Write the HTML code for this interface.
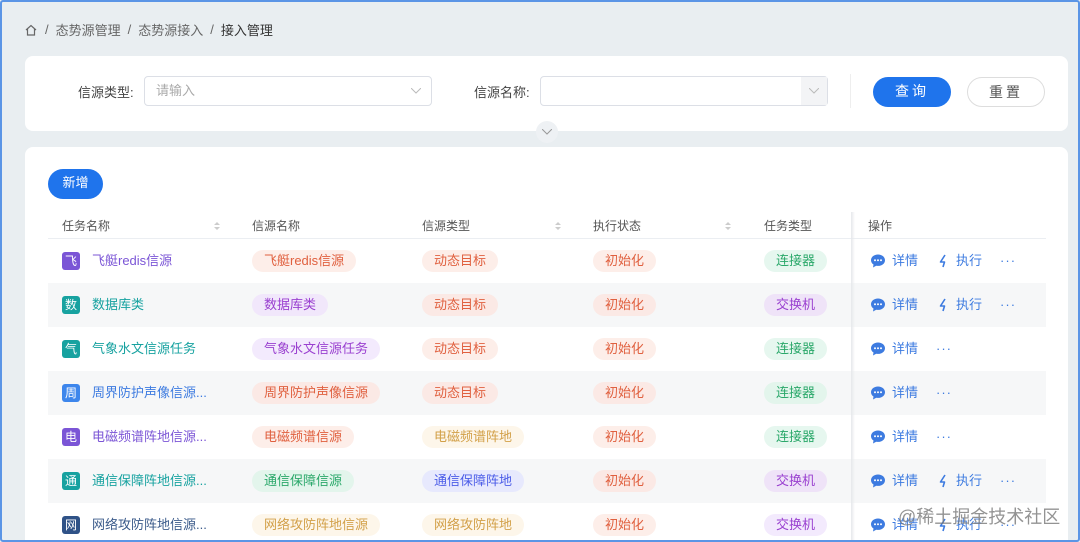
<!DOCTYPE html>
<html><head><meta charset="utf-8"><style>
*{box-sizing:border-box;margin:0;padding:0}
html{width:1080px;height:542px;overflow:hidden}
body{width:1080px;height:542px;overflow:hidden;background:#e9eef1;font-family:"Liberation Sans","Noto Sans CJK SC",sans-serif;position:relative;font-size:13px;color:#333}
.frame{position:absolute;left:0;top:0;width:1080px;height:542px;border:2px solid #5b95e6;border-radius:3px;pointer-events:none;z-index:9}
.bc{position:absolute;left:24px;top:20px;font-size:13px;color:#666;display:flex;align-items:center;gap:7px}
.bc b{font-weight:normal;color:#333}
.card{position:absolute;left:25px;right:12px;background:#fff;border-radius:8px}
.lbl{position:absolute;font-size:13px;color:#444}
.inp{position:absolute;height:30px;border:1px solid #dcdfe6;border-radius:4px;background:#fff;font-size:13px;color:#aaa;padding:6px 11px;line-height:16px}
.btn{position:absolute;height:30px;border-radius:15px;font-size:14px;text-align:center;line-height:28px;letter-spacing:3px}
.tb{position:absolute;left:48px;width:998px;top:212px}
.row{position:absolute;left:0;width:998px;height:44px}
.row.s{background:#f6f7f8}
.c{position:absolute;top:0;height:44px;display:flex;align-items:center;font-size:13px;line-height:18px}
.hd .c{height:27px;color:#555;font-size:12px}
.tag{display:inline-block;height:22px;line-height:22px;padding:0 12px;border-radius:11px;font-size:13px}
.ic{width:18px;height:18px;border-radius:3px;color:#fff;font-size:12px;text-align:center;line-height:18px;margin-right:12px}
.sort{position:absolute;top:9px;width:6px;height:10px}
.op{color:#3d7be0;display:flex;align-items:center;gap:6px}
.dots{color:#3d7be0;letter-spacing:1px}
</style></head><body>
<svg width="0" height="0" style="position:absolute"><defs>
<symbol id="ch" viewBox="0 0 16 16"><path d="M8 1.5C4 1.5 1 4 1 7.2c0 1.8 1 3.3 2.5 4.3L3 14.5l3.2-1.8c.6.1 1.2.2 1.8.2 4 0 7-2.5 7-5.7S12 1.5 8 1.5z" fill="#3d7be0"/><circle cx="5" cy="7.3" r="1" fill="#fff"/><circle cx="8" cy="7.3" r="1" fill="#fff"/><circle cx="11" cy="7.3" r="1" fill="#fff"/></symbol>
<symbol id="bo" viewBox="0 0 12 14"><path d="M7 1L2.5 8H6.5L5 13" fill="none" stroke="#3d7be0" stroke-width="1.6" stroke-linejoin="round"/></symbol>
</defs></svg>
<div class="bc"><svg width="14" height="14" viewBox="0 0 14 14"><path d="M2 7L7 2.5 12 7M3.5 6v6h7V6" fill="none" stroke="#666" stroke-width="1.2"/></svg><span>/</span><span>态势源管理</span><span>/</span><span>态势源接入</span><span>/</span><b>接入管理</b></div>

<div class="card" style="top:56px;height:75px">
<div class="lbl" style="left:53px;top:26px">信源类型:</div>
<div class="inp" style="left:119px;top:20px;width:288px">请输入<svg style="position:absolute;right:10px;top:11px" width="10" height="6"><path d="M0 0L5 5 10 0" fill="none" stroke="#bbb"/></svg></div>
<div class="lbl" style="left:449px;top:26px">信源名称:</div>
<div class="inp" style="left:515px;top:20px;width:288px"><div style="position:absolute;right:0;top:0;width:26px;height:28px;background:#f3f4f6"></div><svg style="position:absolute;right:8px;top:11px" width="10" height="6"><path d="M0 0L5 5 10 0" fill="none" stroke="#bbb"/></svg></div>
<div style="position:absolute;left:825px;top:18px;width:1px;height:34px;background:#eee"></div>
<div class="btn" style="left:848px;top:21px;width:78px;background:#1f74ec;color:#fff">查询</div>
<div class="btn" style="left:942px;top:21px;width:78px;border:1px solid #ddd;color:#555">重置</div>
</div>
<div style="position:absolute;left:536px;top:121px;width:22px;height:22px;border-radius:50%;background:#eef1f4"><svg style="position:absolute;left:6px;top:8px" width="10" height="6"><path d="M0 0L5 5 10 0" fill="none" stroke="#999"/></svg></div>

<div class="card" style="top:147px;height:420px">
<div class="btn" style="left:23px;top:22px;width:55px;background:#1f74ec;color:#fff;font-size:13px;letter-spacing:0">新增</div>
</div>

<div class="tb">
<div class="row hd" style="height:27px;border-bottom:1px solid #ebeef2">
<div class="c" style="left:14px">任务名称</div><svg class="sort" style="left:166px"><path d="M0 4L3 1 6 4M0 6L3 9 6 6" fill="#ccc"/></svg>
<div class="c" style="left:204px">信源名称</div>
<div class="c" style="left:374px">信源类型</div><svg class="sort" style="left:507px"><path d="M0 4L3 1 6 4M0 6L3 9 6 6" fill="#ccc"/></svg>
<div class="c" style="left:545px">执行状态</div><svg class="sort" style="left:677px"><path d="M0 4L3 1 6 4M0 6L3 9 6 6" fill="#ccc"/></svg>
<div class="c" style="left:716px">任务类型</div>
<div class="c" style="left:820px">操作</div>
</div>
<div style="position:absolute;left:803px;top:0;width:4px;height:340px;background:linear-gradient(90deg,#e6e8eb,rgba(255,255,255,0));z-index:3"></div>
</div>

<div class="tb" style="top:239px">
<div class="row" style="top:0"><div class="c" style="left:14px;color:#7b55d6"><div class="ic" style="background:#7b55d6">飞</div>飞艇redis信源</div><div class="c" style="left:204px"><span class="tag" style="background:#fdeee9;color:#e0603f">飞艇redis信源</span></div><div class="c" style="left:374px"><span class="tag" style="background:#fdeee9;color:#e0603f">动态目标</span></div><div class="c" style="left:545px"><span class="tag" style="background:#fdeee9;color:#e0603f">初始化</span></div><div class="c" style="left:716px"><span class="tag" style="background:#e6f7ef;color:#2aa86a">连接器</span></div><div class="c op" style="left:822px"><svg width="16" height="16"><use href="#ch"/></svg><span>详情</span><svg width="12" height="14" style="margin-left:14px"><use href="#bo"/></svg><span>执行</span><span class="dots" style="margin-left:12px">···</span></div></div>
<div class="row s" style="top:44px"><div class="c" style="left:14px;color:#17a2a0"><div class="ic" style="background:#17a2a0">数</div>数据库类</div><div class="c" style="left:204px"><span class="tag" style="background:#f1e7fb;color:#9a40d0">数据库类</span></div><div class="c" style="left:374px"><span class="tag" style="background:#fbe9e5;color:#e0603f">动态目标</span></div><div class="c" style="left:545px"><span class="tag" style="background:#fbe9e5;color:#e0603f">初始化</span></div><div class="c" style="left:716px"><span class="tag" style="background:#efe3f8;color:#9a40d0">交换机</span></div><div class="c op" style="left:822px"><svg width="16" height="16"><use href="#ch"/></svg><span>详情</span><svg width="12" height="14" style="margin-left:14px"><use href="#bo"/></svg><span>执行</span><span class="dots" style="margin-left:12px">···</span></div></div>
<div class="row" style="top:88px"><div class="c" style="left:14px;color:#17a2a0"><div class="ic" style="background:#17a2a0">气</div>气象水文信源任务</div><div class="c" style="left:204px"><span class="tag" style="background:#f3eafd;color:#9a40d0">气象水文信源任务</span></div><div class="c" style="left:374px"><span class="tag" style="background:#fdeee9;color:#e0603f">动态目标</span></div><div class="c" style="left:545px"><span class="tag" style="background:#fdeee9;color:#e0603f">初始化</span></div><div class="c" style="left:716px"><span class="tag" style="background:#e6f7ef;color:#2aa86a">连接器</span></div><div class="c op" style="left:822px"><svg width="16" height="16"><use href="#ch"/></svg><span>详情</span><span class="dots" style="margin-left:12px">···</span></div></div>
<div class="row s" style="top:132px"><div class="c" style="left:14px;color:#3d7be0"><div class="ic" style="background:#3d86ec">周</div>周界防护声像信源...</div><div class="c" style="left:204px"><span class="tag" style="background:#fbe9e5;color:#e0603f">周界防护声像信源</span></div><div class="c" style="left:374px"><span class="tag" style="background:#fbe9e5;color:#e0603f">动态目标</span></div><div class="c" style="left:545px"><span class="tag" style="background:#fbe9e5;color:#e0603f">初始化</span></div><div class="c" style="left:716px"><span class="tag" style="background:#e3f5ec;color:#2aa86a">连接器</span></div><div class="c op" style="left:822px"><svg width="16" height="16"><use href="#ch"/></svg><span>详情</span><span class="dots" style="margin-left:12px">···</span></div></div>
<div class="row" style="top:176px"><div class="c" style="left:14px;color:#7b55d6"><div class="ic" style="background:#7b55d6">电</div>电磁频谱阵地信源...</div><div class="c" style="left:204px"><span class="tag" style="background:#fdeee9;color:#e0603f">电磁频谱信源</span></div><div class="c" style="left:374px"><span class="tag" style="background:#fdf6ea;color:#d2a048">电磁频谱阵地</span></div><div class="c" style="left:545px"><span class="tag" style="background:#fdeee9;color:#e0603f">初始化</span></div><div class="c" style="left:716px"><span class="tag" style="background:#e6f7ef;color:#2aa86a">连接器</span></div><div class="c op" style="left:822px"><svg width="16" height="16"><use href="#ch"/></svg><span>详情</span><span class="dots" style="margin-left:12px">···</span></div></div>
<div class="row s" style="top:220px"><div class="c" style="left:14px;color:#17a2a0"><div class="ic" style="background:#17a2a0">通</div>通信保障阵地信源...</div><div class="c" style="left:204px"><span class="tag" style="background:#e3f5ec;color:#2aa86a">通信保障信源</span></div><div class="c" style="left:374px"><span class="tag" style="background:#e7e9fd;color:#4b5ce8">通信保障阵地</span></div><div class="c" style="left:545px"><span class="tag" style="background:#fbe9e5;color:#e0603f">初始化</span></div><div class="c" style="left:716px"><span class="tag" style="background:#efe3f8;color:#9a40d0">交换机</span></div><div class="c op" style="left:822px"><svg width="16" height="16"><use href="#ch"/></svg><span>详情</span><svg width="12" height="14" style="margin-left:14px"><use href="#bo"/></svg><span>执行</span><span class="dots" style="margin-left:12px">···</span></div></div>
<div class="row" style="top:264px"><div class="c" style="left:14px;color:#3a5a8a"><div class="ic" style="background:#2f5287">网</div>网络攻防阵地信源...</div><div class="c" style="left:204px"><span class="tag" style="background:#fdf6ea;color:#d2a048">网络攻防阵地信源</span></div><div class="c" style="left:374px"><span class="tag" style="background:#fdf6ea;color:#d2a048">网络攻防阵地</span></div><div class="c" style="left:545px"><span class="tag" style="background:#fdeee9;color:#e0603f">初始化</span></div><div class="c" style="left:716px"><span class="tag" style="background:#f3eafd;color:#9a40d0">交换机</span></div><div class="c op" style="left:822px"><svg width="16" height="16"><use href="#ch"/></svg><span>详情</span><svg width="12" height="14" style="margin-left:14px"><use href="#bo"/></svg><span>执行</span><span class="dots" style="margin-left:12px">···</span></div></div>
</div>
<div style="position:absolute;left:898px;top:503px;font-size:18px;color:rgba(120,120,120,.8);z-index:8">@稀土掘金技术社区</div>
<div class="frame"></div>
</body></html>
